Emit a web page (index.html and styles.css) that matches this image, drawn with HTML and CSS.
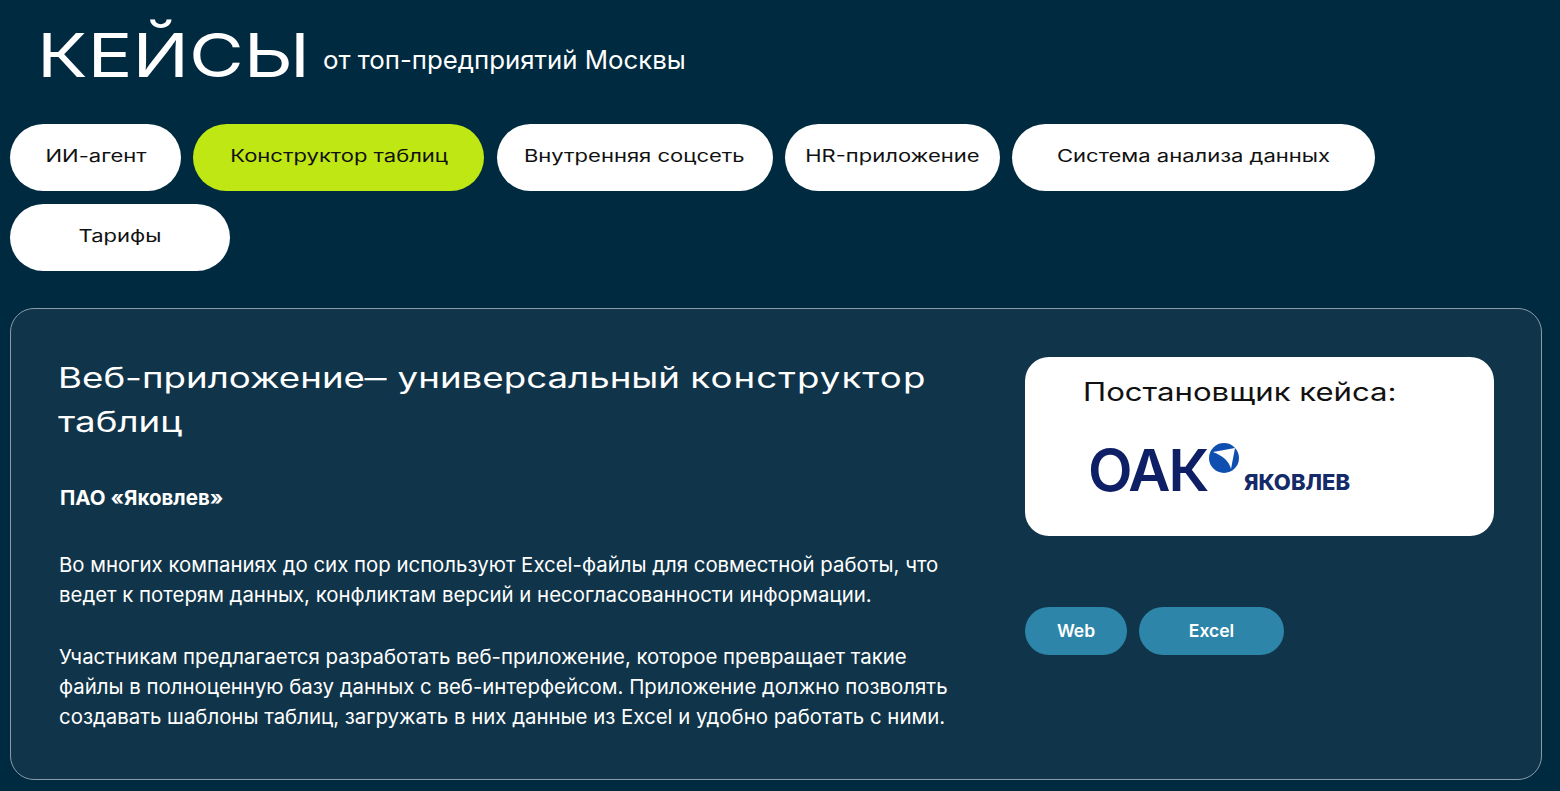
FILE: index.html
```html
<!DOCTYPE html>
<html lang="ru">
<head>
<meta charset="utf-8">
<title>Кейсы</title>
<link rel="stylesheet" href="styles.css">
</head>
<body>
<header class="header">
  <h1 class="title"><span class="wide title-text">КЕЙСЫ</span></h1>
  <p class="subtitle">от топ-предприятий Москвы</p>
</header>
<nav class="tabs">
  <a class="tab tab-1"><span class="wide tab-text">ИИ-агент</span></a>
  <a class="tab tab-2 active"><span class="wide tab-text">Конструктор таблиц</span></a>
  <a class="tab tab-3"><span class="wide tab-text">Внутренняя соцсеть</span></a>
  <a class="tab tab-4"><span class="wide tab-text">HR-приложение</span></a>
  <a class="tab tab-5"><span class="wide tab-text">Система анализа данных</span></a>
  <a class="tab tab-6"><span class="wide tab-text">Тарифы</span></a>
</nav>
<main class="card">
  <section class="main-col">
    <h2 class="case-title"><span class="wide case-line">Веб-приложение<span class="dash">—</span> универсальный <span class="loose">конструктор</span></span><span class="wide case-line">таблиц</span></h2>
    <p class="company">ПАО «Яковлев»</p>
    <p class="para">Во многих компаниях до сих пор используют Excel-файлы для совместной работы, что<br>ведет к потерям данных, конфликтам версий и несогласованности информации.</p>
    <p class="para">Участникам предлагается разработать веб-приложение, которое превращает такие<br>файлы в полноценную базу данных с веб-интерфейсом. Приложение должно позволять<br>создавать шаблоны таблиц, загружать в них данные из Excel и удобно работать с ними.</p>
  </section>
  <aside class="side-col">
    <div class="owner">
      <h3 class="owner-title"><span class="wide owner-text">Постановщик кейса:</span></h3>
      <svg class="logo" width="275" height="84" viewBox="0 0 275 84" role="img" aria-label="ОАК Яковлев">
        <text class="logo-oak" x="0" y="64">ОАК</text>
        <circle cx="136" cy="31" r="15" fill="#0f4fb0"/>
        <path d="M125 25 L147 21 L143 42 C141 34 135 29 125 25 Z" fill="#fff"/>
        <text class="logo-name" x="156" y="63">ЯКОВЛЕВ</text>
      </svg>
    </div>
    <div class="tags">
      <span class="tag tag-web">Web</span>
      <span class="tag tag-excel">Excel</span>
    </div>
  </aside>
</main>
</body>
</html>
```
FILE: styles.css
```css
* { box-sizing: border-box; }
html, body { margin: 0; height: 100%; }
body {
  background: #002a40;
  color: #fff;
  font-family: Inter, "Noto Sans", sans-serif;
  padding: 0 18px 0 10px;
  overflow: hidden;
}
.wide {
  display: block;
  white-space: nowrap;
  transform-origin: left center;
}
.header {
  display: flex;
  align-items: flex-end;
  height: 124px;
  padding: 0 0 39px 27px;
}
.title {
  margin: 0;
  width: 286px;
  font-size: 61px;
  font-weight: 400;
  line-height: 60px;
}
.title-text { transform: scaleX(1.23); }
.subtitle {
  margin: 0 0 9px;
  font-size: 25.8px;
  line-height: 32px;
  font-weight: 400;
  white-space: nowrap;
}
.tabs {
  display: flex;
  flex-wrap: wrap;
  gap: 13px 12.3px;
}
.tab {
  display: flex;
  align-items: center;
  justify-content: center;
  height: 67px;
  padding-bottom: 4px;
  border-radius: 34px;
  background: #fff;
  color: #111;
  font-size: 17px;
  font-weight: 400;
}
.tab.active { background: #bfe714; }
.tab-1 { width: 171px; }
.tab-2 { width: 291px; }
.tab-3 { width: 276px; }
.tab-4 { width: 215px; }
.tab-5 { width: 363px; }
.tab-6 { width: 220px; }
.tab-text { transform-origin: center; transform: scaleX(1.294); }
.card {
  display: flex;
  justify-content: space-between;
  width: 1532px;
  height: 472px;
  margin-top: 37px;
  padding: 48px 47px;
  background: #103449;
  border: 1px solid #8a9ba6;
  border-radius: 24px;
}
.main-col { width: 920px; }
.case-title {
  margin: -1px 0 39px;
  font-size: 28px;
  font-weight: 400;
  line-height: 44px;
}
.case-line { transform: scaleX(1.31); }
.dash {
  display: inline-block;
  width: 17px;
  transform: scaleX(0.6);
  transform-origin: left center;
}
.loose { letter-spacing: 0.8px; }
.company {
  margin: 0 0 37px 2px;
  font-size: 20.5px;
  font-weight: 700;
  line-height: 30px;
}
.para {
  margin: 0 0 31px 1px;
  font-size: 20.4px;
  font-weight: 400;
  line-height: 30.3px;
  white-space: nowrap;
}
.side-col { width: 469px; }
.owner {
  height: 179px;
  padding: 15px 0 0 58px;
  background: #fff;
  border-radius: 24px;
  color: #111;
}
.owner-title {
  margin: 0 0 15px;
  font-size: 25px;
  font-weight: 400;
  line-height: 40px;
}
.owner-text { transform: scaleX(1.245); }
.logo { display: block; margin-left: 5px; }
.logo-oak {
  font-family: Inter, sans-serif;
  font-size: 58px;
  font-weight: 600;
  letter-spacing: -2px;
  fill: #0f1f66;
}
.logo-name {
  font-family: Inter, sans-serif;
  font-size: 22px;
  font-weight: 800;
  fill: #152a68;
}
.tags {
  display: flex;
  gap: 12px;
  margin-top: 71px;
}
.tag {
  display: flex;
  align-items: center;
  justify-content: center;
  height: 48px;
  padding-bottom: 2px;
  border-radius: 24px;
  background: #2d86a9;
  font-size: 17.5px;
  font-weight: 600;
}
.tag-web { width: 102px; }
.tag-excel { width: 145px; }
```
